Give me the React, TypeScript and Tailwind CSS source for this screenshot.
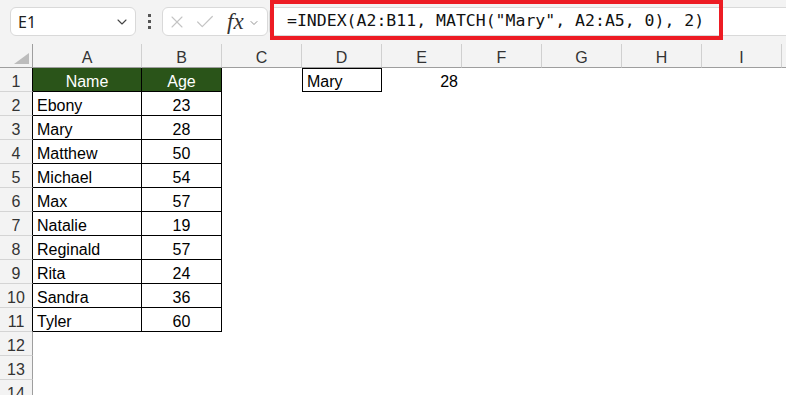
import React from "react";
import { X, Check, ChevronDown } from "lucide-react";

const people = [
  { name: "Ebony", age: 23 },
  { name: "Mary", age: 28 },
  { name: "Matthew", age: 50 },
  { name: "Michael", age: 54 },
  { name: "Max", age: 57 },
  { name: "Natalie", age: 19 },
  { name: "Reginald", age: 57 },
  { name: "Rita", age: 24 },
  { name: "Sandra", age: 36 },
  { name: "Tyler", age: 60 },
];

// J is only partly on screen, so its letter is left out
const columns = ["A", "B", "C", "D", "E", "F", "G", "H", "I", ""];

const cellFont = { fontFamily: '"Liberation Sans", Arial, sans-serif' };

const FormulaBar: React.FC = () => {
  return (
    <div className="relative flex items-start h-[44px] pt-[7px] bg-[#f3f3f3]">
      {/* name box */}
      <div className="ml-[10px] w-[126px] h-[29px] flex items-center justify-between pl-[7px] pr-[5px] rounded-md border border-[#d9d9d9] bg-white">
        <span className="text-[16px] text-[#222]" style={{ fontFamily: '"Noto Sans", sans-serif' }}>
          E1
        </span>
        <ChevronDown size={16} strokeWidth={1.6} className="text-[#444]" />
      </div>

      {/* dots */}
      <div className="ml-[12px] mt-[7px] flex flex-col gap-[3px]">
        <div className="w-[3px] h-[3px] bg-[#555]" />
        <div className="w-[3px] h-[3px] bg-[#555]" />
        <div className="w-[3px] h-[3px] bg-[#555]" />
      </div>

      {/* cancel / enter / fx */}
      <div className="ml-[11px] w-[106px] h-[29px] flex items-center pl-[4px] rounded-md border border-[#d9d9d9] bg-white">
        <X size={20} strokeWidth={1.3} className="text-[#c4c4c4]" />
        <Check size={22} strokeWidth={1.3} className="ml-[7px] text-[#c4c4c4]" />
        <span
          className="ml-[11px] text-[23px] italic font-medium text-[#333] leading-none"
          style={{ fontFamily: '"Liberation Serif", "Times New Roman", serif' }}
        >
          fx
        </span>
        <ChevronDown size={12} strokeWidth={1.6} className="ml-[4px] mt-[3px] text-[#777]" />
      </div>

      {/* formula input */}
      <div className="ml-[1px] flex-1 h-[29px] flex items-center pl-[17px] rounded-l-md border border-r-0 border-[#d9d9d9] bg-white">
        <span
          className="text-[16.5px] text-[#111] whitespace-pre"
          style={{ fontFamily: '"DejaVu Sans Mono", "Liberation Mono", monospace' }}
        >
          =INDEX(A2:B11, MATCH("Mary", A2:A5, 0), 2)
        </span>
      </div>

      {/* annotation box */}
      <div className="absolute left-[270px] top-0 w-[453px] h-[40px] border-4 border-[#ed1c24]" />
    </div>
  );
};

const Sheet: React.FC = () => {
  const rows = Array.from({ length: 14 }, (_, i) => i + 1);

  return (
    <div
      className="grid grid-cols-[33px_109px_repeat(9,80px)] auto-rows-[24px] text-[16px] text-black"
      style={cellFont}
    >
      {/* corner */}
      <div className="relative bg-[#f3f3f3] border-r border-b border-[#9e9e9e]">
        <div className="absolute right-[3px] bottom-[3px] w-0 h-0 border-l-[15px] border-l-transparent border-b-[11px] border-b-[#bcbcbc]" />
      </div>

      {columns.map((c, i) => (
        <div
          key={i}
          className="bg-[#f3f3f3] border-r border-[#d0d0d0] border-b border-b-[#9e9e9e] text-center pt-1 leading-5 text-[#333]"
        >
          {c}
        </div>
      ))}

      {rows.map((r) => {
        const inTable = r <= 11;
        const person = r >= 2 && r <= 11 ? people[r - 2] : null;

        return (
          <React.Fragment key={r}>
            <div
              className={
                inTable
                  ? "bg-[#f3f3f3] border-r border-r-black border-b border-b-[#d4d4d4] text-center pt-1 leading-5 text-[#333]"
                  : "bg-[#f3f3f3] border-r border-r-[#9e9e9e] border-b border-b-[#d4d4d4] text-center pt-1 leading-5 text-[#333]"
              }
            >
              {r}
            </div>

            {/* A */}
            {r === 1 ? (
              <div className="bg-[#2a5419] text-white text-center border-r border-b border-black pt-1 leading-5">
                Name
              </div>
            ) : person ? (
              <div className="border-r border-b border-black pl-[4px] pt-1 leading-5">{person.name}</div>
            ) : (
              <div />
            )}

            {/* B */}
            {r === 1 ? (
              <div className="bg-[#2a5419] text-white text-center border-r border-b border-black pt-1 leading-5">
                Age
              </div>
            ) : person ? (
              <div className="border-r border-b border-black text-center pt-1 leading-5">{person.age}</div>
            ) : (
              <div />
            )}

            {/* C */}
            <div />

            {/* D */}
            {r === 1 ? (
              <div className="border border-black pl-[4px] pt-[3px] leading-5">Mary</div>
            ) : (
              <div />
            )}

            {/* E */}
            {r === 1 ? <div className="text-right pr-[4px] pt-1 leading-5">28</div> : <div />}

            <div />
            <div />
            <div />
            <div />
            <div />
          </React.Fragment>
        );
      })}
    </div>
  );
};

const App: React.FC = () => {
  return (
    <div className="w-[786px] h-[395px] overflow-hidden bg-white">
      <FormulaBar />
      <Sheet />
    </div>
  );
};

export default App;
